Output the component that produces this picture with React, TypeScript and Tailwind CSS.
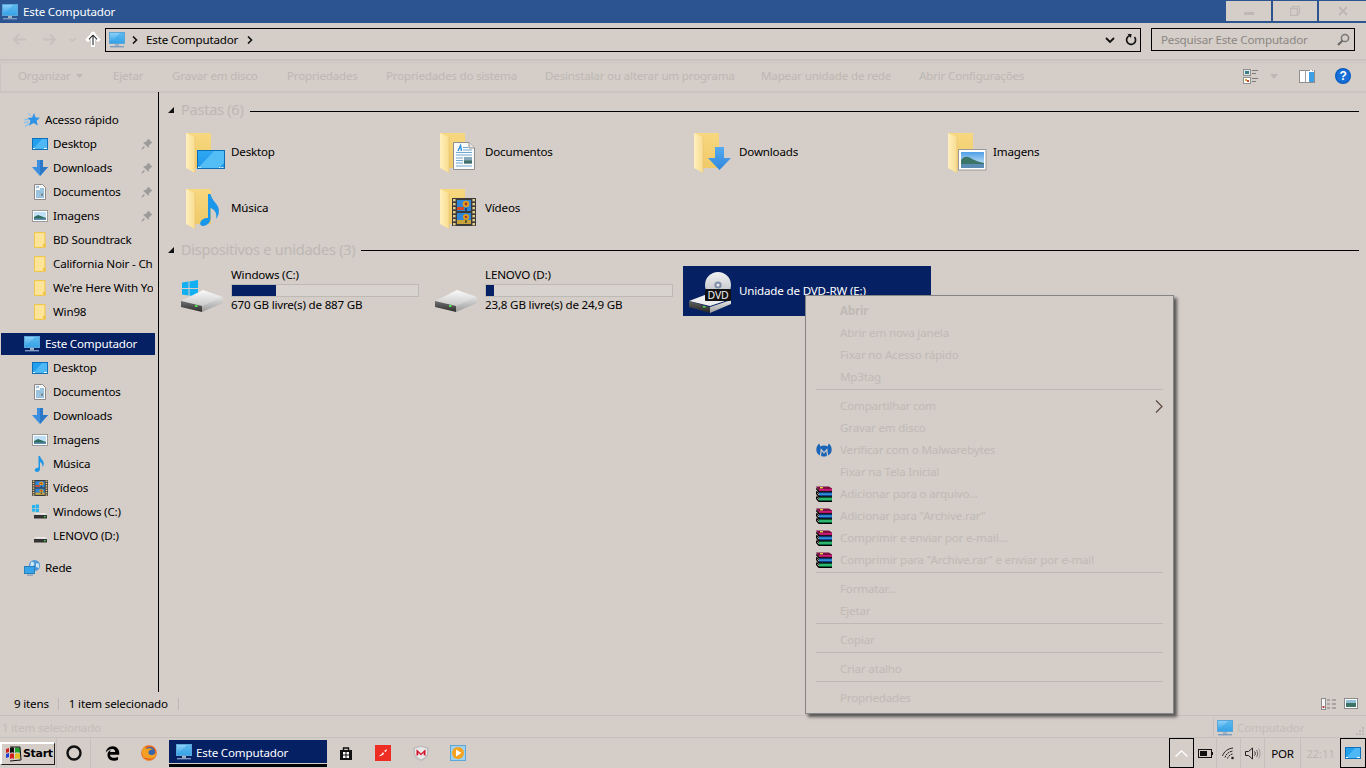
import React from 'react';
import { FaEdgeLegacy } from 'react-icons/fa6';

function Grad({ id, a, b, h }: { id: string; a: string; b: string; h?: boolean }) {
  return (
    <linearGradient id={id} x1="0" y1="0" x2={h ? '1' : '0'} y2={h ? '0' : '1'}>
      <stop offset="0" stopColor={a} />
      <stop offset="1" stopColor={b} />
    </linearGradient>
  );
}

function Monitor({ size = 16 }: { size?: number }) {
  return (
    <svg width={size} height={size} viewBox="0 0 16 16" className="shrink-0">
      <defs><Grad id="mon" a="#8fd2f7" b="#2a9be6" /></defs>
      <rect x="0.5" y="0.5" width="15" height="11" fill="url(#mon)" stroke="#5aa6d8" strokeWidth="1" />
      <path d="M1 11 L11 1 H15 V11 Z" fill="#3ea8ea" opacity="0.6" />
      <rect x="6" y="12" width="4" height="2" fill="#9fb0c0" />
      <rect x="1" y="14" width="14" height="1.4" fill="#7d9cc0" />
    </svg>
  );
}

function SmDesktop() {
  return (
    <svg width="16" height="16" viewBox="0 0 16 16" className="shrink-0">
      <rect x="0.5" y="2.5" width="15" height="11" fill="#22a0ee" stroke="#0f6fb8" />
      <path d="M1 13 L10 3 H15 V13 Z" fill="#4db8f5" />
      <path d="M1 12.5 H3 M12 12.5 H15" stroke="#fff" strokeWidth="1" />
    </svg>
  );
}

function SmDown() {
  return (
    <svg width="16" height="16" viewBox="0 0 16 16" className="shrink-0">
      <path d="M5 0 H11 V7 H16 L8 16 L0 7 H5 Z" fill="#3a8fe0" />
      <path d="M8 0 H11 V7 H16 L8 16 Z" fill="#2b78c9" />
    </svg>
  );
}

function SmDoc() {
  return (
    <svg width="16" height="16" viewBox="0 0 16 16" className="shrink-0">
      <path d="M2.5 0.5 H10.5 L13.5 3.5 V15.5 H2.5 Z" fill="#f7f7f7" stroke="#8a8a8a" />
      <path d="M4 3 H7 M8 5 H12 M4 7 H12 M4 9 H12 M4 11 H8 M4 13 H12" stroke="#3f8fc8" strokeWidth="1" />
      <rect x="8.5" y="9.5" width="3" height="2.5" fill="#6c8fa0" />
    </svg>
  );
}

function SmImage() {
  return (
    <svg width="16" height="16" viewBox="0 0 16 16" className="shrink-0">
      <rect x="0.5" y="2.5" width="15" height="11" fill="#fff" stroke="#9a9a9a" />
      <rect x="2" y="4" width="12" height="8" fill="#bfe0f5" />
      <path d="M2 9 L6 7 L10 8.5 L14 10 V12 H2 Z" fill="#2f6a5e" />
      <rect x="2" y="10.5" width="12" height="1.5" fill="#5d8fb5" />
    </svg>
  );
}

function SmFolder() {
  return (
    <svg width="16" height="16" viewBox="0 0 16 16" className="shrink-0">
      <path d="M2.5 0.5 H13 V12 H11.5 V15.5 H2.5 Z" fill="#fde498" stroke="#f0c648" />
      <rect x="12" y="12" width="2" height="3.5" fill="#f0c648" />
    </svg>
  );
}

function SmMusic() {
  return (
    <svg width="16" height="16" viewBox="0 0 16 16" className="shrink-0">
      <path d="M6.5 0 H8 C8.5 3 12 4.5 11.8 8 C11.6 9.5 11 10.5 10.5 11 C10.8 8.5 9.5 6.5 8 6 V13 C8 15 6.5 16 5 16 C3.5 16 2.6 15 2.8 13.8 C3 12.5 5 11.4 6.5 11.8 Z" fill="#1e96e8" />
    </svg>
  );
}

function FilmBody() {
  return (
    <>
      <rect x="0" y="0" width="24" height="28" fill="#3a3a3a" />
      <rect x="5" y="2" width="14" height="11" fill="#2f85d8" />
      <rect x="5" y="15" width="14" height="11" fill="#2f85d8" />
      <circle cx="14" cy="6" r="3.3" fill="#e2a21a" />
      <circle cx="14" cy="6" r="1.4" fill="#b0302a" />
      <rect x="5" y="9" width="7" height="3" fill="#d4482a" />
      <path d="M14 10 V13" stroke="#111" strokeWidth="1" />
      <circle cx="14" cy="19" r="3" fill="#e2a21a" />
      <circle cx="14" cy="19" r="1.3" fill="#b0302a" />
      <rect x="5" y="22" width="14" height="4" fill="#c8a33a" />
      <path d="M14 22 V25" stroke="#111" strokeWidth="1" />
      {[1, 5, 9, 13, 17, 21, 25].map((y) => (
        <g key={y}>
          <rect x="1" y={y} width="2.6" height="2.4" fill="#e2c98a" />
          <rect x="20.4" y={y} width="2.6" height="2.4" fill="#e2c98a" />
        </g>
      ))}
    </>
  );
}

function SmFilm() {
  return (
    <svg width="16" height="16" viewBox="0 0 24 28" preserveAspectRatio="none" className="shrink-0">
      <FilmBody />
    </svg>
  );
}

function SmDrive({ win }: { win?: boolean }) {
  return (
    <svg width="16" height="16" viewBox="0 0 16 16" className="shrink-0">
      {win && (
        <g fill="#26b4ee">
          <rect x="0" y="1" width="3" height="3" />
          <rect x="3.6" y="0.5" width="3.4" height="3.5" />
          <rect x="0" y="4.6" width="3" height="3" />
          <rect x="3.6" y="4.6" width="3.4" height="3.5" />
        </g>
      )}
      <path d="M2 10 L3.5 9 H13.5 L15 11 Z" fill="#e9e9e9" />
      <rect x="2" y="11" width="13" height="3.5" fill="#333" />
      <rect x="12" y="12" width="1.6" height="1.4" fill="#3fd24a" />
    </svg>
  );
}

function Pin() {
  return (
    <svg width="12" height="12" viewBox="0 0 12 12" className="shrink-0">
      <path d="M7 0.5 L11.5 5 L9.8 5.6 L8 7.4 L7.6 10 L2 4.4 L4.6 4 L6.4 2.2 Z" fill="#9b9b9b" />
      <path d="M3.5 8.5 L1 11" stroke="#9b9b9b" strokeWidth="1.4" />
    </svg>
  );
}

function Star() {
  return (
    <svg width="16" height="16" viewBox="0 0 16 16" className="shrink-0">
      <path d="M10 1 L11.6 5.4 L16 5.8 L12.6 8.8 L13.8 13.6 L9.6 11 L5 13.8 L6.4 8.8 L3.4 6 L8.2 5.4 Z" fill="#2f93e8" />
      <path d="M0 8 L4 7.4 M0 11 L4.6 9.6 M1 14.5 L5 11.8" stroke="#7cc0f2" strokeWidth="1.1" />
      <path d="M4 1 L7 4" stroke="#7cc0f2" strokeWidth="1" />
    </svg>
  );
}

function Net() {
  return (
    <svg width="16" height="16" viewBox="0 0 16 16" className="shrink-0">
      <circle cx="10.5" cy="5.5" r="5.5" fill="#4d98d8" />
      <path d="M7 2 C9 1 11 3 10 5 C9 7 7 6 6 7 Z M12 3 L15 4 L15 8 L12 7 Z" fill="#cfe6f4" />
      <rect x="0.5" y="6.5" width="10" height="7" fill="#36a3ea" stroke="#2a7fb8" />
      <rect x="3" y="14.4" width="6" height="1.4" fill="#8aa2bb" />
    </svg>
  );
}

function FolderBack() {
  return (
    <>
      <defs>
        <Grad id="fb" a="#f7d880" b="#f0c968" />
        <Grad id="ff" a="#fff0bd" b="#f8dc90" h />
      </defs>
      <rect x="4" y="6" width="25" height="35" fill="url(#fb)" />
      <path d="M4 6 L13 10 V46 L4 41 Z" fill="url(#ff)" />
      <path d="M13 10 V46" stroke="#e6c473" strokeWidth="0.6" />
    </>
  );
}

function BigFolder({ kind }: { kind: string }) {
  return (
    <svg width="48" height="48" viewBox="0 0 48 48" className="shrink-0">
      <FolderBack />
      {kind === 'desktop' && (
        <g>
          <defs><Grad id="dk" a="#2fa8f2" b="#1d96ea" /></defs>
          <rect x="15.5" y="23.5" width="27" height="18" fill="url(#dk)" stroke="#0b6fb8" />
          <path d="M16 41 L32 24 H42 V36 L37 41 Z" fill="#53bdf6" />
          <path d="M16 40.5 H19 M37 40.5 H42" stroke="#fff" strokeWidth="1" strokeDasharray="1 0.6" />
        </g>
      )}
      {kind === 'doc' && (
        <g>
          <path d="M17.5 15.5 H33 L38.5 21 V42.5 H17.5 Z" fill="#fafafa" stroke="#8f8f8f" />
          <path d="M33 15.5 V21 H38.5" fill="#e6e6e6" stroke="#8f8f8f" />
          <path d="M22 24 L24.5 18.5 L25.5 24" fill="none" stroke="#2f8fdc" strokeWidth="1.4" />
          <path d="M27 20.5 H32 M27 23 H36 M20 25.5 H36 M20 28 H36 M20 31 H27 M20 33.5 H27 M20 36 H27 M20 39 H36" stroke="#6fa8d0" strokeWidth="1" />
          <rect x="28" y="30" width="8" height="6.5" fill="#86a8b8" />
          <rect x="28" y="33.5" width="8" height="3" fill="#3f6f68" />
        </g>
      )}
      {kind === 'down' && (
        <g>
          <defs><Grad id="ar" a="#56aaf0" b="#2f86dc" /></defs>
          <path d="M25 20 H34 V31 H41 L29.5 43 L18 31 H25 Z" fill="url(#ar)" />
        </g>
      )}
      {kind === 'img' && (
        <g>
          <rect x="14.5" y="22.5" width="27.5" height="20.5" fill="#fff" stroke="#9a9a9a" />
          <defs><Grad id="sky" a="#4f9fe6" b="#e4f2fa" /></defs>
          <rect x="17" y="25" width="23" height="16" fill="url(#sky)" />
          <path d="M17 33 C20 29 24 29 28 32 C32 34 36 35 40 36 V38 H17 Z" fill="#3c7566" />
          <rect x="17" y="37" width="23" height="4" fill="#5a8cb4" />
        </g>
      )}
      {kind === 'music' && (
        <path d="M26 11 H28.5 C29.5 17 35 20 36.5 25 C37.5 29 36.6 33 34 36 C35.2 31 33.5 27 28.5 25 V36 C28.5 40 24 43 21 43 C18.6 43 17.6 41 18.4 39 C19.4 36.4 23 34.4 26 35 Z" fill="#1a96ea" />
      )}
      {kind === 'film' && (
        <svg x="16" y="15" width="24" height="28" viewBox="0 0 24 28"><FilmBody /></svg>
      )}
    </svg>
  );
}

function BigDrive({ win }: { win?: boolean }) {
  return (
    <svg width="48" height="48" viewBox="0 0 48 48" className="shrink-0">
      <defs>
        <Grad id="dr" a="#fafafa" b="#c9c9c9" />
        <Grad id="dr2" a="#707070" b="#2e2e2e" />
        <Grad id="dr3" a="#e0e0e0" b="#9c9c9c" />
      </defs>
      {win && (
        <g fill="#12b0f0">
          <path d="M2 15.5 L8.5 14.5 V21 H2 Z" />
          <path d="M9.5 14.4 L18 13 V21 H9.5 Z" />
          <path d="M2 22 H8.5 V28.5 L2 27.5 Z" />
          <path d="M9.5 22 H18 V30 L9.5 28.6 Z" />
        </g>
      )}
      <path d="M1 34 L23 23 L43 30 L22 39 Z" fill="url(#dr)" />
      <path d="M1 34 L22 39 V45 L1 40 Z" fill="url(#dr2)" />
      <path d="M22 39 L43 30 V36 L22 45 Z" fill="url(#dr3)" />
      <rect x="15" y="38" width="2.5" height="2" fill="#4fe04f" />
    </svg>
  );
}

function BigDvd() {
  return (
    <svg width="48" height="48" viewBox="0 0 48 48" className="shrink-0">
      <defs>
        <Grad id="dv" a="#f2f2f2" b="#b4b8c0" />
        <Grad id="dr2b" a="#606060" b="#262626" />
        <Grad id="dr3b" a="#e6e6e6" b="#a0a0a0" />
      </defs>
      <path d="M1 34 L22 26 L43 32 L22 39 Z" fill="#efefef" />
      <path d="M1 34 L22 40 V46 L1 40 Z" fill="url(#dr2b)" />
      <path d="M22 40 L43 33 V37 L22 46 Z" fill="url(#dr3b)" />
      <rect x="15" y="39" width="2.5" height="1.6" fill="#4fe04f" />
      <circle cx="30" cy="18" r="13" fill="url(#dv)" />
      <circle cx="30" cy="18" r="3.6" fill="#7f8ea8" />
      <circle cx="30" cy="18" r="1.6" fill="#e8e8e8" />
      <rect x="17" y="22" width="26" height="12" rx="1" fill="#111" />
      <text x="30" y="32" textAnchor="middle" fontSize="10.5" fill="#eee" fontFamily="'Noto Sans',sans-serif">DVD</text>
    </svg>
  );
}

function Rar() {
  return (
    <svg width="16" height="16" viewBox="0 0 16 16" className="shrink-0">
      <path d="M0 0.5 H13 L16 2.5 V5.5 H3 Z" fill="#7c0f40" />
      <rect x="3" y="3.2" width="13" height="1.4" fill="#e0208a" />
      <rect x="3" y="6" width="13" height="4.6" fill="#123f96" />
      <rect x="3" y="7.4" width="13" height="1.4" fill="#38a8e0" />
      <rect x="3" y="11" width="13" height="4.6" fill="#07663a" />
      <rect x="3" y="12.3" width="13" height="1.4" fill="#3fd888" />
      <path d="M0 2.5 L3 5.6 L0 7 L3 10.6 L0 12 L3 15.5 H16" fill="none" stroke="#000" strokeWidth="1.2" />
      <path d="M0 5 L3 8 M0 9.5 L3 13" stroke="#000" strokeWidth="0.8" />
      <path d="M3 5.7 H16 M3 10.7 H16" stroke="#000" strokeWidth="1" />
      <rect x="4" y="1" width="3" height="1.4" fill="#e6d23c" />
    </svg>
  );
}

function Malware() {
  return (
    <svg width="16" height="16" viewBox="0 0 16 16" className="shrink-0">
      <path d="M3.2 1.5 C1 3 0 6 0.4 8.8 C0.9 12 4 14.6 8 14.6 C12 14.6 15.1 12 15.6 8.8 C16 6 15 3 12.8 1.5 L11.6 4.4 C10.6 3.8 9.4 3.5 8 3.5 C6.6 3.5 5.4 3.8 4.4 4.4 Z" fill="#1a64b8" />
      <path d="M4.4 14.4 L5.2 7.6 L8 10.8 L10.8 7.6 L11.6 14.4" fill="none" stroke="#d4cdc8" strokeWidth="1.2" />
    </svg>
  );
}

function Titlebar() {
  return (
    <div className="flex h-[23px] bg-[#2c5491] shrink-0">
      <div className="flex items-center pl-[2px] gap-[5px] text-white">
        <Monitor size={16} />
        <span>Este Computador</span>
      </div>
      <div className="ml-auto flex gap-[2px] pt-px pb-[2px]">
        <div className="w-[45px] bg-[#d4cdc8] flex items-center justify-center">
          <div className="w-[10px] h-[3px] mt-[4px] bg-[#bdb8b3]" />
        </div>
        <div className="w-[44px] bg-[#d4cdc8] flex items-center justify-center">
          <svg width="10" height="10" viewBox="0 0 10 10">
            <path d="M2.5 2.5 V0.5 H9.5 V7.5 H7.5" fill="none" stroke="#bdb8b3" />
            <rect x="0.5" y="2.5" width="7" height="7" fill="none" stroke="#bdb8b3" strokeWidth="1.4" />
          </svg>
        </div>
        <div className="w-[47px] bg-[#d4cdc8] flex items-center justify-center">
          <svg width="10" height="10" viewBox="0 0 10 10">
            <path d="M1 1 L9 9 M9 1 L1 9" stroke="#bdb8b3" strokeWidth="1.8" />
          </svg>
        </div>
      </div>
    </div>
  );
}

function Navbar() {
  return (
    <div className="flex h-[36px] shrink-0 pt-[5px] items-start">
      <div className="w-[105px] h-[24px] flex items-center shrink-0">
        <svg width="105" height="24" viewBox="0 0 105 24">
          <path d="M26 11.5 H14 M19 6.5 L14 11.5 L19 16.5" fill="none" stroke="#c6c1bc" strokeWidth="2" />
          <path d="M43 11.5 H55 M50 6.5 L55 11.5 L50 16.5" fill="none" stroke="#c6c1bc" strokeWidth="2" />
          <path d="M69.5 10.5 L72.5 13 L75.5 10.5" fill="none" stroke="#c6c1bc" strokeWidth="1.4" />
          <path d="M93 6 V17 M93 6 L88 11.5 M93 6 L98 11.5" fill="none" stroke="#fff" strokeWidth="4" strokeLinecap="square" />
          <path d="M93 7 V17 M93 7 L89 11.3 M93 7 L97 11.3" fill="none" stroke="#2a2a2a" strokeWidth="1.1" />
        </svg>
      </div>
      <div className="w-[1036px] h-[24px] border border-black flex items-center pl-[3px] shrink-0">
        <Monitor size={16} />
        <svg width="6" height="8" viewBox="0 0 6 8" className="ml-[7px]"><path d="M1 0.5 L4.5 4 L1 7.5" fill="none" stroke="#111" strokeWidth="1.6" /></svg>
        <span className="ml-[8px] pb-px text-black">Este Computador</span>
        <svg width="6" height="8" viewBox="0 0 6 8" className="ml-[9px]"><path d="M1 0.5 L4.5 4 L1 7.5" fill="none" stroke="#111" strokeWidth="1.6" /></svg>
        <svg width="10" height="7" viewBox="0 0 10 7" className="ml-auto"><path d="M1 1 L5 5 L9 1" fill="none" stroke="#111" strokeWidth="1.8" /></svg>
        <svg width="12" height="12" viewBox="0 0 12 12" className="ml-[10px] mr-[3px]">
          <path d="M9.5 3 A 4.5 4.5 0 1 1 4.5 1.7" fill="none" stroke="#111" strokeWidth="1.7" />
          <path d="M2.5 0 L6.5 0 L6 4 Z" fill="#111" />
        </svg>
      </div>
      <div className="w-[204px] h-[23px] ml-[10px] border border-black flex items-center pl-[9px] shrink-0 text-[#8b8782]">
        <span>Pesquisar Este Computador</span>
        <svg width="13" height="13" viewBox="0 0 13 13" className="ml-auto mr-[4px]">
          <circle cx="8" cy="5" r="3.6" fill="none" stroke="#777" strokeWidth="1.5" />
          <path d="M5.4 7.6 L1 12" stroke="#666" strokeWidth="2" />
        </svg>
      </div>
    </div>
  );
}

const tools: [string, string][] = [
  ['Ejetar', 'w-[59px]'],
  ['Gravar em disco', 'w-[115px]'],
  ['Propriedades', 'w-[99px]'],
  ['Propriedades do sistema', 'w-[159px]'],
  ['Desinstalar ou alterar um programa', 'w-[216px]'],
  ['Mapear unidade de rede', 'w-[158px]'],
  ['Abrir Configurações', 'w-[130px]'],
];

function Toolbar() {
  return (
    <div className="h-[33px] shrink-0 border-t-2 border-[#c6c2bd] pt-px">
      <div className="h-[31px] border-b-2 border-t border-l border-[#c9c5c0] flex items-center pl-[17px] pb-[2px]">
        <div className="w-[95px] flex items-center gap-[5px] text-[#bdb8b3] shrink-0">
          <span>Organizar</span>
          <svg width="7" height="4" viewBox="0 0 7 4"><path d="M0 0 H7 L3.5 4 Z" fill="#bdb8b3" /></svg>
        </div>
        {tools.map(([t, w]) => (
          <div key={t} className={`${w} text-[#bdb8b3] shrink-0 whitespace-nowrap`}>
            {t}
          </div>
        ))}
        <div className="ml-auto flex items-center pr-[15px]">
          <svg width="16" height="15" viewBox="0 0 16 15">
            <rect x="0.5" y="0.5" width="7" height="6" fill="#dce8ee" stroke="#8f8f8f" />
            <rect x="2" y="2" width="4" height="3" fill="#3c7f80" />
            <rect x="0.5" y="8.5" width="7" height="6" fill="#fff" stroke="#8f8f8f" />
            <rect x="2" y="10" width="2" height="2" fill="#d9a436" />
            <rect x="4" y="11" width="2" height="2" fill="#bf4a30" />
            <path d="M9 1.5 H15 M9 4.5 H13 M9 9.5 H15 M9 12.5 H13" stroke="#7c7c7c" />
          </svg>
          <svg width="8" height="5" viewBox="0 0 8 5" className="ml-[11px]"><path d="M0 0 H8 L4 5 Z" fill="#bdb8b3" /></svg>
          <svg width="16" height="13" viewBox="0 0 16 13" className="ml-[21px]">
            <rect x="0.5" y="0.5" width="15" height="12" fill="#fff" stroke="#8f8f8f" />
            <rect x="6" y="1" width="1" height="11" fill="#9f9f9f" />
            <rect x="10" y="2" width="5" height="10" fill="#3f9fe6" />
            <path d="M11 0.5 H13 M14 0.5 H15" stroke="#fff" />
          </svg>
          <svg width="16" height="16" viewBox="0 0 16 16" className="ml-[20px]">
            <circle cx="8" cy="8" r="8" fill="#0a5cc0" />
            <circle cx="8" cy="8" r="6.6" fill="#1670d8" />
            <text x="8" y="12.4" textAnchor="middle" fontSize="12" fontWeight="700" fill="#fff" fontFamily="'Liberation Sans',sans-serif">?</text>
          </svg>
        </div>
      </div>
    </div>
  );
}

function SideRow({ icon, label, level, pin, selected }: { icon: React.ReactNode; label: string; level: 1 | 2; pin?: boolean; selected?: boolean }) {
  return (
    <div className="h-6 flex items-center">
      <div className={`flex items-center h-[22px] w-full pr-[2px] ml-px ${selected ? 'bg-[#062064] text-white' : 'text-black'} ${level === 1 ? 'pl-[23px]' : 'pl-[31px]'}`}>
        <span className="-mt-px flex items-center shrink-0">{icon}</span>
        <span className="ml-[5px] whitespace-nowrap overflow-hidden flex-1">{label}</span>
        {pin && <Pin />}
      </div>
    </div>
  );
}

function Sidebar() {
  return (
    <div className="w-[159px] shrink-0 border-r border-black pt-[16px] overflow-hidden pr-[3px]">
      <SideRow level={1} icon={<Star />} label="Acesso rápido" />
      <SideRow level={2} icon={<SmDesktop />} label="Desktop" pin />
      <SideRow level={2} icon={<SmDown />} label="Downloads" pin />
      <SideRow level={2} icon={<SmDoc />} label="Documentos" pin />
      <SideRow level={2} icon={<SmImage />} label="Imagens" pin />
      <SideRow level={2} icon={<SmFolder />} label="BD Soundtrack" />
      <SideRow level={2} icon={<SmFolder />} label="California Noir - Ch" />
      <SideRow level={2} icon={<SmFolder />} label="We're Here With Yo" />
      <SideRow level={2} icon={<SmFolder />} label="Win98" />
      <div className="h-2" />
      <SideRow level={1} icon={<Monitor />} label="Este Computador" selected />
      <SideRow level={2} icon={<SmDesktop />} label="Desktop" />
      <SideRow level={2} icon={<SmDoc />} label="Documentos" />
      <SideRow level={2} icon={<SmDown />} label="Downloads" />
      <SideRow level={2} icon={<SmImage />} label="Imagens" />
      <SideRow level={2} icon={<SmMusic />} label="Música" />
      <SideRow level={2} icon={<SmFilm />} label="Vídeos" />
      <SideRow level={2} icon={<SmDrive win />} label="Windows (C:)" />
      <SideRow level={2} icon={<SmDrive />} label="LENOVO (D:)" />
      <div className="h-2" />
      <SideRow level={1} icon={<Net />} label="Rede" />
    </div>
  );
}

function GroupHeader({ label, className, lineClass }: { label: string; className?: string; lineClass?: string }) {
  return (
    <div className={`h-5 flex items-center pl-[9px] pr-[7px] ${className ?? ''}`}>
      <svg width="6" height="6" viewBox="0 0 6 6" className="shrink-0"><path d="M6 0 V6 H0 Z" fill="#111" /></svg>
      <span className="ml-[7px] text-[14.5px] tracking-[-0.24px] text-[#bdb8b3] whitespace-nowrap">{label}</span>
      <div className={`ml-[6px] h-px flex-1 bg-black ${lineClass ?? ''}`} />
    </div>
  );
}

const folders: [string, string][] = [
  ['Desktop', 'desktop'],
  ['Documentos', 'doc'],
  ['Downloads', 'down'],
  ['Imagens', 'img'],
  ['Música', 'music'],
  ['Vídeos', 'film'],
];

function DriveTile({ name, free, fill, win }: { name: string; free: string; fill: string; win?: boolean }) {
  return (
    <div className="w-[248px] h-[50px] flex items-start pl-[5px] pt-px">
      <BigDrive win={win} />
      <div className="ml-[3px] w-[188px]">
        <div className="leading-[16px] h-[16px]">{name}</div>
        <div className="h-[13px] border border-[#bdbab6] mt-px bg-[#d8d3cf]">
          <div className={`h-full bg-[#062064] ${fill}`} />
        </div>
        <div className="leading-[16px] h-[16px]">{free}</div>
      </div>
    </div>
  );
}

function Main() {
  return (
    <div className="flex-1 pt-[8px] min-w-0">
      <GroupHeader label="Pastas (6)" lineClass="mt-[2px]" />
      <div className="mt-[3px] pl-[16px] grid grid-cols-[repeat(4,254px)] auto-rows-[56px]">
        {folders.map(([n, k]) => (
          <div key={n} className="flex items-center pl-[7px] text-black">
            <BigFolder kind={k} />
            <span className="ml-px pt-[2px]">{n}</span>
          </div>
        ))}
      </div>
      <GroupHeader label="Dispositivos e unidades (3)" className="mt-[5px]" />
      <div className="mt-[6px] pl-[16px] flex gap-[6px] text-black">
        <DriveTile name="Windows (C:)" free="670 GB livre(s) de 887 GB" fill="w-[23.5%]" win />
        <DriveTile name="LENOVO (D:)" free="23,8 GB livre(s) de 24,9 GB" fill="w-[4.5%]" />
        <div className="w-[248px] h-[50px] flex items-center pl-[5px] text-white bg-[#062064]">
          <BigDvd />
          <span className="ml-[3px]">Unidade de DVD-RW (E:)</span>
        </div>
      </div>
    </div>
  );
}

function StatusBar() {
  return (
    <div className="h-[23px] shrink-0 flex items-center text-black">
      <span className="ml-[14px]">9 itens</span>
      <div className="h-[12px] w-px bg-[#bdb8b3] ml-[9px]" />
      <span className="ml-[10px]">1 item selecionado</span>
      <div className="h-[12px] w-px bg-[#bdb8b3] ml-[10px]" />
      <div className="ml-auto flex items-center gap-[7px] pr-[8px]">
        <svg width="16" height="12" viewBox="0 0 16 12">
          <rect x="0.5" y="0.5" width="4" height="11" fill="#f5f5f5" stroke="#8a8a8a" />
          <rect x="1.5" y="8" width="2" height="2" fill="#c04040" />
          <path d="M6 2 H9 M11 2 H15 M6 6 H9 M11 6 H15 M6 10 H9 M11 10 H15" stroke="#7c7c7c" />
        </svg>
        <svg width="14" height="11" viewBox="0 0 14 11">
          <rect x="0.5" y="0.5" width="13" height="10" fill="#fff" stroke="#8a8a8a" />
          <rect x="2" y="2" width="10" height="7" fill="#8ec0d8" />
          <rect x="2" y="5" width="10" height="4" fill="#3c7566" />
        </svg>
      </div>
    </div>
  );
}

function Details() {
  return (
    <div className="h-[23px] shrink-0 border-t border-b border-[#c4c0bb] flex items-center text-[#c2bdb8]">
      <span className="ml-[2px] pt-[3px]">1 item selecionado</span>
      <div className="ml-auto w-[153px] self-end h-[19px] border-l border-[#c4c0bb] flex items-center pl-[3px] relative">
        <Monitor size={16} />
        <span className="ml-[4px]">Computador</span>
        <svg width="9" height="9" viewBox="0 0 9 9" className="absolute right-[1px] bottom-[1px]">
          <path d="M6 0 H8 V2 H6 Z M3 3 H5 V5 H3 Z M6 3 H8 V5 H6 Z M0 6 H2 V8 H0 Z M3 6 H5 V8 H3 Z M6 6 H8 V8 H6 Z" fill="#bdb8b3" />
        </svg>
      </div>
    </div>
  );
}

function Taskbar() {
  return (
    <div className="h-[30px] shrink-0 flex items-stretch text-black">
      <div className="w-[55px] h-[23px] mt-[4px] border-t-2 border-l-2 border-t-white border-l-white border-b border-r border-b-[#222] border-r-[#222] flex items-center pl-[3px] shrink-0 bg-[#d4cdc8]">
        <svg width="17" height="16" viewBox="0 0 17 16" className="shrink-0">
          <path d="M1 3 L4 2 V6 L1 7 Z" fill="#d02020" />
          <path d="M1 8 L4 7 V11 L1 12 Z" fill="#2040d0" />
          <path d="M5 2 C7 1 8 1 9 2 V7 C8 6 7 6 5 7 Z" fill="#111" />
          <path d="M10 2 C11 1 13 1 15 2 V7 C13 6 11 6 10 7 Z" fill="#20a030" />
          <path d="M5 8 C7 7 8 7 9 8 V13 C8 12 7 12 5 13 Z" fill="#d02020" />
          <path d="M10 8 C11 7 13 7 15 8 V13 C13 12 11 12 10 13 Z" fill="#e0c020" />
          <path d="M5 1 L15 1 L16 14 L5 15" fill="none" stroke="#111" strokeWidth="1" />
        </svg>
        <span className="ml-px font-['DejaVu_Sans',sans-serif] font-bold text-[11px] tracking-[-0.3px]">Start</span>
      </div>
      <div className="w-[35px] ml-px border-x border-[#c4c0bb] flex items-center justify-center shrink-0">
        <svg width="16" height="16" viewBox="0 0 16 16"><circle cx="8" cy="8" r="6.5" fill="none" stroke="#111" strokeWidth="2.4" /></svg>
      </div>
      <div className="w-[42px] h-full flex items-center justify-center shrink-0">
        <FaEdgeLegacy size={15} color="#000" />
      </div>
      <div className="w-[32px] h-full flex items-center justify-center shrink-0">
        <svg width="16" height="16" viewBox="0 0 16 16">
          <circle cx="8" cy="8" r="7.8" fill="#e8651f" />
          <circle cx="9" cy="7" r="5" fill="#3566ae" />
          <path d="M1 6 C1.5 3 3 1.5 4.5 1 C4 2.5 4.5 3.5 5.5 4 C7 3 10 3 12 5 C10 4.5 8 5 7.5 7 C7 9 9 10.5 11.5 10 C13.5 9.5 15 8 15.5 7 C15.8 11 12 15.5 8 15.5 C4 15.5 0.5 11 1 6 Z" fill="#f4a024" />
          <path d="M3 12 C5 15 10 15.6 13 13 C10 14 6 14 3 12 Z" fill="#d9461c" />
        </svg>
      </div>
      <div className="w-[158px] ml-[4px] mt-[2px] flex flex-col shrink-0">
        <div className="h-[23px] flex items-center pl-[7px] text-white gap-[4px] bg-[#062064]">
          <Monitor size={16} />
          <span className="pt-[2px]">Este Computador</span>
        </div>
        <div className="h-px" />
        <div className="h-[3px] bg-black" />
      </div>
      <div className="w-[38px] h-full flex items-center justify-center shrink-0">
        <svg width="12" height="13" viewBox="0 0 12 13">
          <path d="M0 3 H12 V13 H0 Z" fill="#111" />
          <path d="M3.5 3 V1 H8.5 V3" fill="none" stroke="#111" strokeWidth="1.4" />
          <path d="M3 5 H5.5 V7.6 H3 Z M6.5 5 H9 V7.6 H6.5 Z M3 8.4 H5.5 V11 H3 Z M6.5 8.4 H9 V11 H6.5 Z" fill="#fff" />
        </svg>
      </div>
      <div className="w-[35px] h-full flex items-center justify-center shrink-0">
        <svg width="16" height="16" viewBox="0 0 16 16">
          <rect width="16" height="16" fill="#ee2d24" />
          <path d="M3 11 C5 11 7 9 8 7 L9 9 C7.5 10.5 5 11.5 3 11 Z M9 6 L12 4 L11 7 Z" fill="#fff" />
        </svg>
      </div>
      <div className="w-[41px] h-full flex items-center justify-center shrink-0">
        <svg width="16" height="16" viewBox="0 0 16 16">
          <path d="M8 0.5 L15.5 2.5 V8 C15.5 12 12 14.5 8 16 C4 14.5 0.5 12 0.5 8 V2.5 Z" fill="#bdbdbd" />
          <path d="M8 2 L14 3.5 V8 C14 11 11 13 8 14.4 C5 13 2 11 2 8 V3.5 Z" fill="#e8e8e8" />
          <path d="M3.5 11 V4.2 L8 8.4 L12.5 4.2 V11 L10.6 9.8 V7.6 L8 10.4 L5.4 7.6 V9.8 Z" fill="#d3122a" />
        </svg>
      </div>
      <div className="w-[34px] h-full flex items-center justify-center shrink-0">
        <svg width="16" height="16" viewBox="0 0 16 16">
          <rect x="0.5" y="0.5" width="15" height="15" fill="#9fd0ee" stroke="#5fa6d8" />
          <circle cx="8" cy="8" r="6" fill="#f5a21e" />
          <path d="M6 4.5 L11.5 8 L6 11.5 Z" fill="#fff" />
        </svg>
      </div>
      <div className="ml-auto flex h-full">
        <div className="w-[25px] border border-black flex items-center justify-center">
          <svg width="13" height="7" viewBox="0 0 13 7"><path d="M0.5 6.5 L6.5 0.8 L12.5 6.5" fill="none" stroke="#fff" strokeWidth="1.3" /></svg>
        </div>
        <div className="w-[23px] border-r border-[#c4c0bb] flex items-center justify-center">
          <svg width="15" height="9" viewBox="0 0 15 9">
            <rect x="0.5" y="0.5" width="13" height="8" fill="none" stroke="#111" />
            <rect x="2" y="2" width="7" height="5" fill="#111" />
            <rect x="14" y="3" width="1" height="3" fill="#111" />
          </svg>
        </div>
        <div className="w-[24px] border-r border-[#c4c0bb] flex items-center justify-center">
          <svg width="13" height="13" viewBox="0 0 13 13" fill="none" stroke="#222" strokeWidth="1">
            <path d="M0.5 9 C2 4.5 6 1.5 11 1" />
            <path d="M3 10.5 C4 7 7 4.5 11 4" strokeDasharray="2 0.6" />
            <path d="M5.5 11.5 C6 9.5 8 7.5 10.5 7" strokeDasharray="2 0.6" />
            <circle cx="10.5" cy="11" r="1.3" fill="#222" stroke="none" />
          </svg>
        </div>
        <div className="w-[24px] border-r border-[#c4c0bb] flex items-center justify-center">
          <svg width="16" height="13" viewBox="0 0 16 13" fill="none" stroke="#222" strokeWidth="1">
            <path d="M0.5 4.5 H3.5 L7.5 1 V12 L3.5 8.5 H0.5 Z" />
            <path d="M9.5 4.5 C10.5 5.5 10.5 7.5 9.5 8.5" />
            <path d="M11.5 3 C13 5 13 8 11.5 10" stroke="#666" />
            <path d="M13.5 1.5 C15.5 4.5 15.5 8.5 13.5 11.5" stroke="#999" />
          </svg>
        </div>
        <div className="w-[36px] border-r border-[#c4c0bb] flex items-center justify-center pt-px">POR</div>
        <div className="w-[39px] flex items-center justify-center pt-px text-[#bdb8b3]">22:11</div>
        <div className="w-[26px] border border-black flex items-center justify-center">
          <SmDesktop />
        </div>
      </div>
    </div>
  );
}

type MenuEntry = { t?: string; bold?: boolean; icon?: 'rar' | 'mb'; arrow?: boolean };

const menu: MenuEntry[] = [
  { t: 'Abrir', bold: true },
  { t: 'Abrir em nova janela' },
  { t: 'Fixar no Acesso rápido' },
  { t: 'Mp3tag' },
  {},
  { t: 'Compartilhar com', arrow: true },
  { t: 'Gravar em disco' },
  { t: 'Verificar com o Malwarebytes', icon: 'mb' },
  { t: 'Fixar na Tela Inicial' },
  { t: 'Adicionar para o arquivo...', icon: 'rar' },
  { t: 'Adicionar para "Archive.rar"', icon: 'rar' },
  { t: 'Comprimir e enviar por e-mail...', icon: 'rar' },
  { t: 'Comprimir para "Archive.rar" e enviar por e-mail', icon: 'rar' },
  {},
  { t: 'Formatar...' },
  { t: 'Ejetar' },
  {},
  { t: 'Copiar' },
  {},
  { t: 'Criar atalho' },
  {},
  { t: 'Propriedades' },
];

function ContextMenu() {
  return (
    <div className="absolute left-[805px] top-[295px] w-[369px] h-[419px] bg-[#d4cdc8] border border-[#858585] shadow-[3px_3px_3px_rgba(50,50,50,0.75)] pt-[4px] px-[10px]">
      {menu.map((m, i) =>
        m.t ? (
          <div key={i} className="h-[22px] flex items-center text-[#bfbab5]">
            <div className="w-[24px] flex items-center shrink-0">
              {m.icon === 'rar' && <Rar />}
              {m.icon === 'mb' && <Malware />}
            </div>
            <span className={m.bold ? 'font-bold' : ''}>{m.t}</span>
            {m.arrow && (
              <svg width="8" height="13" viewBox="0 0 8 13" className="ml-auto">
                <path d="M1 0.5 L7 6.5 L1 12.5" fill="none" stroke="#5c4a3e" strokeWidth="1.2" />
              </svg>
            )}
          </div>
        ) : (
          <div key={i} className="h-[7px] pt-px">
            <div className="h-px bg-[#bdb9b5]" />
          </div>
        )
      )}
    </div>
  );
}

export default function App() {
  return (
    <div className="relative w-[1366px] h-[768px] overflow-hidden flex flex-col bg-[#d4cdc8] font-['Noto_Sans',sans-serif] text-[11.6px] tracking-[-0.18px]">
      <Titlebar />
      <Navbar />
      <Toolbar />
      <div className="flex-1 flex min-h-0">
        <Sidebar />
        <Main />
      </div>
      <StatusBar />
      <Details />
      <Taskbar />
      <ContextMenu />
    </div>
  );
}
